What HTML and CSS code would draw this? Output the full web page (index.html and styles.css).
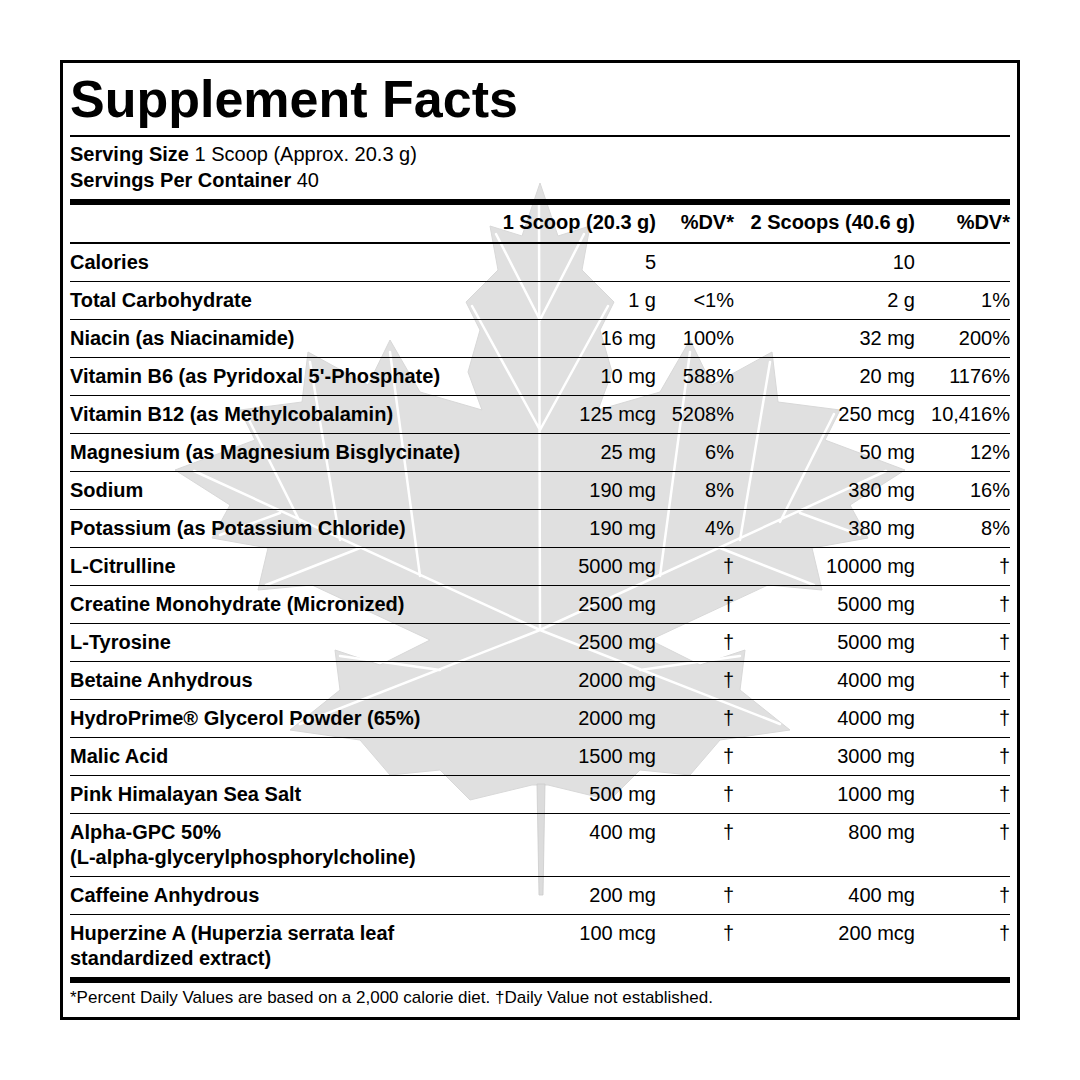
FILE: index.html
```html
<!DOCTYPE html>
<html lang="en">
<head>
<meta charset="utf-8">
<title>Supplement Facts</title>
<link rel="stylesheet" href="styles.css">
</head>
<body>
<div class="panel">
  <svg class="leaf" viewBox="63 63 954 954" xmlns="http://www.w3.org/2000/svg" aria-hidden="true">
    <path class="leaf-body" d="M540 183 L558 236 L590 226 L582 270 L614 302 L600 330 L612 372 L598 410 L660 392 L690 340 L712 385 L772 352 L778 402 L840 410 L825 440 L905 470 L850 505 L868 538 L812 548 L822 590 L768 585 L650 640 L700 665 L745 650 L740 690 L790 730 L720 740 L690 775 L640 770 L610 800 L548 785 L532 785 L470 800 L440 770 L390 775 L360 740 L290 730 L340 690 L335 650 L380 665 L430 640 L312 585 L258 590 L268 548 L212 538 L230 505 L175 470 L255 440 L240 410 L302 402 L308 352 L368 385 L390 340 L420 392 L482 410 L468 372 L480 330 L466 302 L498 270 L490 226 L522 236 Z"/>
    <path class="stem" d="M537 784 L545 784 L543 895 L539 895 Z"/>
    <path class="veins" d="M540 630 L539 205 M540 630 L886 471 M540 630 L194 471 M540 630 L780 724 M540 630 L300 724 M540 430 L608 306 M540 430 L472 306 M540 320 L584 234 M540 320 L496 234 M660 576 L690 352 M420 576 L390 352 M740 540 L770 362 M340 540 L310 362 M780 522 L834 414 M300 522 L246 414 M720 548 L814 585 M360 548 L266 585 M800 513 L860 535 M280 513 L220 535 M640 670 L740 656 M440 670 L340 656"/>
  </svg>
  <div class="content">
    <h1 class="title">Supplement Facts</h1>
    <div class="serving">
      <div><b>Serving Size</b> 1 Scoop (Approx. 20.3 g)</div>
      <div><b>Servings Per Container</b> 40</div>
    </div>
    <div class="table">
      <div class="row head"><span></span><span>1 Scoop (20.3 g)</span><span>%DV*</span><span>2 Scoops (40.6 g)</span><span>%DV*</span></div>
      <div class="row"><span class="name">Calories</span><span>5</span><span></span><span>10</span><span></span></div>
      <div class="row"><span class="name">Total Carbohydrate</span><span>1 g</span><span>&lt;1%</span><span>2 g</span><span>1%</span></div>
      <div class="row"><span class="name">Niacin (as Niacinamide)</span><span>16 mg</span><span>100%</span><span>32 mg</span><span>200%</span></div>
      <div class="row"><span class="name">Vitamin B6 (as Pyridoxal 5'-Phosphate)</span><span>10 mg</span><span>588%</span><span>20 mg</span><span>1176%</span></div>
      <div class="row"><span class="name">Vitamin B12 (as Methylcobalamin)</span><span>125 mcg</span><span>5208%</span><span>250 mcg</span><span>10,416%</span></div>
      <div class="row"><span class="name">Magnesium (as Magnesium Bisglycinate)</span><span>25 mg</span><span>6%</span><span>50 mg</span><span>12%</span></div>
      <div class="row"><span class="name">Sodium</span><span>190 mg</span><span>8%</span><span>380 mg</span><span>16%</span></div>
      <div class="row"><span class="name">Potassium (as Potassium Chloride)</span><span>190 mg</span><span>4%</span><span>380 mg</span><span>8%</span></div>
      <div class="row"><span class="name">L-Citrulline</span><span>5000 mg</span><span>†</span><span>10000 mg</span><span>†</span></div>
      <div class="row"><span class="name">Creatine Monohydrate (Micronized)</span><span>2500 mg</span><span>†</span><span>5000 mg</span><span>†</span></div>
      <div class="row"><span class="name">L-Tyrosine</span><span>2500 mg</span><span>†</span><span>5000 mg</span><span>†</span></div>
      <div class="row"><span class="name">Betaine Anhydrous</span><span>2000 mg</span><span>†</span><span>4000 mg</span><span>†</span></div>
      <div class="row"><span class="name">HydroPrime® Glycerol Powder (65%)</span><span>2000 mg</span><span>†</span><span>4000 mg</span><span>†</span></div>
      <div class="row"><span class="name">Malic Acid</span><span>1500 mg</span><span>†</span><span>3000 mg</span><span>†</span></div>
      <div class="row"><span class="name">Pink Himalayan Sea Salt</span><span>500 mg</span><span>†</span><span>1000 mg</span><span>†</span></div>
      <div class="row"><span class="name">Alpha-GPC 50%<br><span class="nowrap">(L-alpha-glycerylphosphorylcholine)</span></span><span>400 mg</span><span>†</span><span>800 mg</span><span>†</span></div>
      <div class="row"><span class="name">Caffeine Anhydrous</span><span>200 mg</span><span>†</span><span>400 mg</span><span>†</span></div>
      <div class="row"><span class="name">Huperzine A (Huperzia serrata leaf<br>standardized extract)</span><span>100 mcg</span><span>†</span><span>200 mcg</span><span>†</span></div>
    </div>
    <div class="footer">*Percent Daily Values are based on a 2,000 calorie diet. †Daily Value not established.</div>
  </div>
</div>
</body>
</html>
```

FILE: styles.css
```css
html, body {
  margin: 0;
  padding: 0;
  background: #ffffff;
}

body {
  font-family: "Liberation Sans", Arial, Helvetica, sans-serif;
  color: #000000;
}

.panel {
  position: relative;
  box-sizing: border-box;
  width: 960px;
  height: 960px;
  margin: 60px 0 0 60px;
  border: 3px solid #000000;
  padding: 0 7px;
  background: #ffffff;
}

.leaf {
  position: absolute;
  left: 0;
  top: 0;
  width: 954px;
  height: 954px;
  z-index: 0;
}

.leaf-body {
  fill: #e0e0e0;
  stroke: #d8d8d8;
  stroke-width: 1;
  stroke-linejoin: round;
}

.stem {
  fill: #dcdcdc;
  stroke: #cccccc;
  stroke-width: 0.8;
}

.veins {
  fill: none;
  stroke: #ffffff;
  stroke-width: 2.5;
  stroke-linecap: round;
}

.content {
  position: relative;
  z-index: 1;
}

.title {
  margin: 0;
  padding: 6px 0 6px;
  font-size: 52px;
  line-height: 60px;
  font-weight: bold;
  border-bottom: 2px solid #000000;
}

.serving {
  padding: 4px 0 6px;
  font-size: 20px;
  line-height: 26px;
  border-bottom: 6px solid #000000;
}

.table {
  border-bottom: 6px solid #000000;
}

.row {
  display: grid;
  grid-template-columns: 400px 186px 78px 181px 95px;
  font-size: 20px;
  line-height: 25px;
  padding: 6px 0;
  border-bottom: 1px solid #000000;
}

.row > span {
  text-align: right;
  white-space: nowrap;
}

.row > span.name {
  text-align: left;
  font-weight: bold;
  white-space: normal;
}

.nowrap {
  white-space: nowrap;
}

.row.head {
  padding: 5px 0 7px;
  border-bottom-width: 2px;
  font-weight: bold;
}

.row:last-child {
  border-bottom: 0;
}

.footer {
  padding-top: 5px;
  font-size: 17px;
  line-height: 20px;
}
```
